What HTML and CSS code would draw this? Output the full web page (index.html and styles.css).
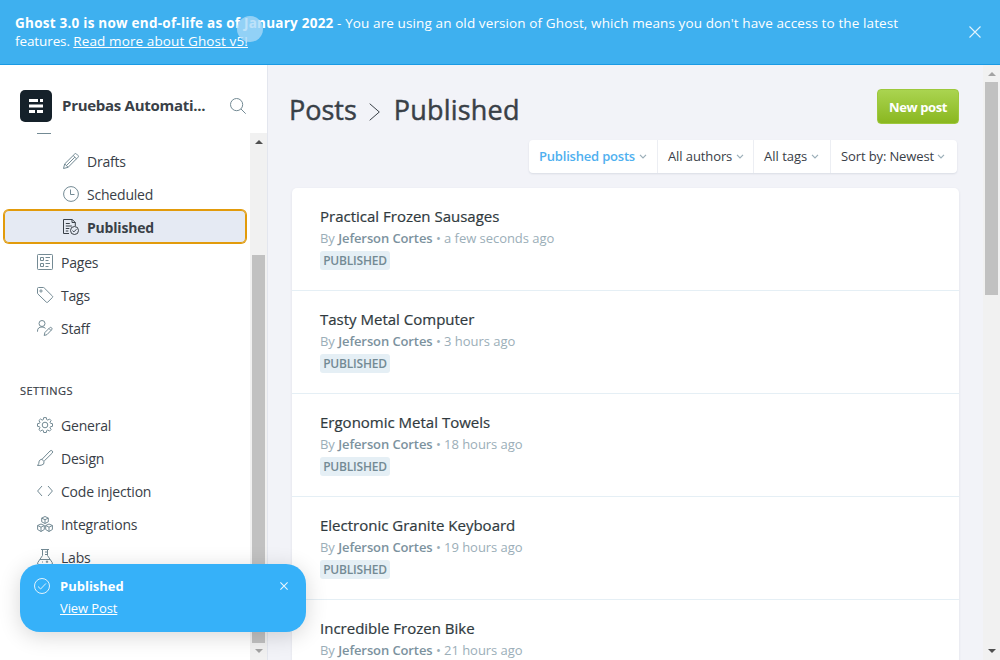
FILE: index.html
```html
<!DOCTYPE html>
<html lang="en">
<head>
<meta charset="utf-8">
<title>Posts - Published</title>
<link rel="stylesheet" href="styles.css">
</head>
<body>
<div class="app">
  <header class="banner">
    <p class="banner-text"><b>Ghost 3.0 is now end-of-life as of January 2022</b> <span class="banner-rest">- You are using an old version of Ghost, which means you don't have access to the latest</span><br><span class="banner-second">features. <a>Read more about Ghost v5!</a></span></p>
    <svg class="banner-close" viewBox="0 0 12 12"><path d="M.5.5l11 11M11.5.5l-11 11"/></svg>
    <span class="click-dot"></span>
  </header>
  <div class="body">
    <aside class="sidebar">
      <div class="brand">
        <svg class="logo" viewBox="0 0 32 32"><rect width="32" height="32" rx="5"/><path d="M9 9h9v3H9zm11 0h3v3h-3zM9 14.5h14v3H9zM9 20h6v3H9zm8 0h6v3h-6z"/></svg>
        <span class="brand-name">Pruebas Automati...</span>
        <svg class="icon search" viewBox="0 0 16 16"><circle cx="6.6" cy="6.6" r="6.1"/><path d="M11 11l4.7 4.7"/></svg>
      </div>
      <div class="nav-wrap">
        <nav class="nav">
          <div class="nav-clip"></div>
          <a class="item sub"><svg class="icon" viewBox="0 0 16 16"><path d="M.5 15.5l1.200-4.600L11.800.9q.8-.8 1.600 0l1.700 1.700q.8.8 0 1.600L5.100 14.300zM1.700 10.900l3.400 3.400M10.200 2.500l3.300 3.300M3.400 12.600l8.400-8.400"/></svg><span>Drafts</span></a>
          <a class="item sub"><svg class="icon" viewBox="0 0 16 16"><circle cx="8" cy="8" r="7.4"/><path d="M7.5 3.5v5h4"/></svg><span>Scheduled</span></a>
          <a class="item sub active"><svg class="icon" viewBox="0 0 16 16"><path d="M6 14.5H.5V.5h8.800l3 3V7M9 .5v3h3.300M2.800 4.500h4M2.800 7h6M2.800 9.500h3.500M2.800 12h2.500"/><circle cx="11.5" cy="11.5" r="4"/><path d="M9.500 11.600l1.400 1.300 2.600-2.700"/></svg><span>Published</span></a>
          <a class="item after"><svg class="icon" viewBox="0 0 16 16"><rect x=".5" y=".5" width="15" height="15" rx=".8"/><path d="M3.500 3.500h3v3h-3zM3.500 9.500h3v3h-3zM8.500 3.500h4.500M8.500 6.500h3M8.500 9.500h4.500M8.500 12.500h3"/></svg><span>Pages</span></a>
          <a class="item"><svg class="icon" viewBox="0 0 16 16"><path d="M.5 1.500q0-1 1-1h4.700q.6 0 1 .4l8.300 8.300q.6.6 0 1.200l-4.800 4.800q-.7.6-1.300 0L.9 7Q.5 6.600.5 6z"/><circle cx="4" cy="4" r="1.1"/></svg><span>Tags</span></a>
          <a class="item"><svg class="icon" viewBox="0 0 16 16"><circle cx="5" cy="3.500" r="3"/><path d="M.5 11.700V11q.1-4 4.500-4 2.300 0 3.500 1.400M7.200 15.500l.7-3 4.700-4.700q1-.9 2 0t0 2L10 14.600zM12 8.500l2 2"/></svg><span>Staff</span></a>
          <h2 class="group">Settings</h2>
          <a class="item"><svg class="icon" viewBox="0 0 16 16"><path d="M6.700.6h2.600l.4 2 1.100.5 1.700-1.100 1.600 1.600L13 5.200l.5 1.100 2 .4v2.600l-2 .4-.5 1.100 1.100 1.700-1.600 1.600-1.700-1.100-1.100.5-.4 2H6.700l-.4-2-1.100-.5-1.700 1.100-1.600-1.600L3 10.800l-.5-1.100-2-.4V6.700l2-.4L3 5.200 1.900 3.600 3.500 2l1.700 1.100 1.100-.5z"/><circle cx="8" cy="8" r="2.800"/></svg><span>General</span></a>
          <a class="item"><svg class="icon" viewBox="0 0 16 16"><path d="M5.100 9.200L13 1q1.200-1 2.200-.1t0 2.200L7.200 11M5 9.200q-2 .1-2.800 1.900-.2 3-1.700 4.400 4.200.2 6.100-1.400Q8.300 12 5 9.200z"/></svg><span>Design</span></a>
          <a class="item"><svg class="icon" viewBox="0 0 16 16"><path d="M5 3L.6 8 5 13M11 3l4.400 5L11 13"/></svg><span>Code injection</span></a>
          <a class="item"><svg class="icon" viewBox="0 0 16 16"><path d="M8 .5l3.300 1.600v3.700L8 7.500 4.700 5.800V2.100zM4.700 2.100L8 3.700l3.300-1.600M8 3.700v3.800M4 8l3.300 1.500v4L4 15.500.6 13.500v-4zM.6 9.500L4 11.200l3.300-1.700M4 11.200v4.300M12 8l3.400 1.500v4L12 15.500l-3.300-2v-4zM8.700 9.500l3.300 1.700 3.400-1.700M12 11.200v4.300"/></svg><span>Integrations</span></a>
          <a class="item"><svg class="icon" viewBox="0 0 16 16"><path d="M4 .5h8M5.500.5v6L.8 13.500q-.8 2 1 2h12.400q1.800 0 1-2L10.500 6.500v-6M8 3h2.500M8 5.500h2.500M3 10.500h10M5 13h1M10 11.500v2.500M8.800 12.800h2.400"/></svg><span>Labs</span></a>
        </nav>
        <div class="scroll side-scroll"><i class="up dark"></i><i class="thumb"></i><i class="down"></i></div>
      </div>
    </aside>
    <main class="main">
      <div class="content">
        <div class="title-row">
          <h1><span>Posts</span><svg class="crumb" viewBox="0 0 11 18"><path d="M.7.7L10.300 9 .7 17.300"/></svg><span class="current">Published</span></h1>
          <button class="new-post">New post</button>
        </div>
        <div class="filters">
          <div class="filter f1"><span>Published posts</span><svg viewBox="0 0 8 5"><path d="M1 .8l3 3 3-3"/></svg></div>
          <div class="filter f2"><span>All authors</span><svg viewBox="0 0 8 5"><path d="M1 .8l3 3 3-3"/></svg></div>
          <div class="filter f3"><span>All tags</span><svg viewBox="0 0 8 5"><path d="M1 .8l3 3 3-3"/></svg></div>
          <div class="filter f4"><span>Sort by: Newest</span><svg viewBox="0 0 8 5"><path d="M1 .8l3 3 3-3"/></svg></div>
        </div>
        <div class="posts">
          <article class="post"><h3>Practical Frozen Sausages</h3><p><span>By</span> <b>Jeferson Cortes</b> <span>• a few seconds ago</span></p><em>PUBLISHED</em></article>
          <article class="post"><h3>Tasty Metal Computer</h3><p><span>By</span> <b>Jeferson Cortes</b> <span>• 3 hours ago</span></p><em>PUBLISHED</em></article>
          <article class="post"><h3>Ergonomic Metal Towels</h3><p><span>By</span> <b>Jeferson Cortes</b> <span>• 18 hours ago</span></p><em>PUBLISHED</em></article>
          <article class="post"><h3>Electronic Granite Keyboard</h3><p><span>By</span> <b>Jeferson Cortes</b> <span>• 19 hours ago</span></p><em>PUBLISHED</em></article>
          <article class="post"><h3>Incredible Frozen Bike</h3><p><span>By</span> <b>Jeferson Cortes</b> <span>• 21 hours ago</span></p></article>
        </div>
      </div>
      <div class="scroll main-scroll"><i class="up"></i><i class="thumb"></i><i class="down dark"></i></div>
    </main>
  </div>
  <div class="toast">
    <svg class="toast-icon" viewBox="0 0 16 16"><circle cx="8" cy="8" r="7.500"/><path d="M4 8.500l2.600 2.500L12 5.400"/></svg>
    <div class="toast-body"><b>Published</b><a>View Post</a></div>
    <svg class="toast-close" viewBox="0 0 8 8"><path d="M.4.4l7.200 7.200M7.600.4L.4 7.600"/></svg>
  </div>
</div>
</body>
</html>
```
FILE: styles.css
```css
* { box-sizing: border-box; }
body { margin: 0; font-family: "Open Sans", "Noto Sans", sans-serif; color: #394047; }
h1, h2, h3, p { margin: 0; }
svg { fill: none; flex: none; overflow: visible; }
.app { position: relative; width: 1000px; height: 660px; overflow: hidden; display: flex; flex-direction: column; background: #f2f3f8; }

.banner { position: relative; height: 65px; flex: none; display: flex; justify-content: space-between; padding: 14px 19px 0 15px; background: #3eb0ef; border-bottom: 1px solid #1a9ae4; color: #fff; }
.banner-text { font-size: 13.5px; line-height: 18px; white-space: nowrap; }
.banner-text b { letter-spacing: .24px; }
.banner-rest { letter-spacing: .11px; }
.banner-second { letter-spacing: -.1px; }
.banner-text a { text-decoration: underline; letter-spacing: .11px; }
.banner-close { width: 12px; height: 12px; margin-top: 12px; stroke: #e2f3fd; stroke-width: 1.1; }
.click-dot { position: absolute; left: 237px; top: 16px; width: 26px; height: 26px; border-radius: 50%; background: rgba(170, 218, 247, .78); }

.body { flex: 1; min-height: 0; display: flex; }
.sidebar { width: 268px; flex: none; display: flex; flex-direction: column; background: #fff; border-right: 1px solid #e3e6ee; }
.brand { height: 68px; flex: none; display: flex; align-items: center; padding: 14px 21px 0 20px; }
.logo { width: 32px; height: 32px; fill: #15212a; }
.logo path { fill: #fff; }
.brand-name { flex: 1; margin-left: 10px; padding-bottom: 2px; font-size: 15px; line-height: 20px; font-weight: 700; letter-spacing: -.28px; white-space: nowrap; }
.icon { width: 16px; height: 16px; stroke: #738a94; stroke-width: 1; stroke-linejoin: round; }
.nav-wrap { flex: 1; min-height: 0; display: flex; }
.nav { flex: 1; overflow: hidden; }
.nav-clip { height: 11px; margin-left: 37px; width: 14px; border-top: 1px solid #738a94; }
.item { height: 33px; display: flex; align-items: center; padding-left: 37px; font-size: 14px; line-height: 20px; letter-spacing: -.2px; color: #394047; }
.item span { margin-left: 8px; padding-top: 2px; white-space: nowrap; }
.item.sub { padding-left: 63px; }
.item.active { margin: 0 4px; padding-left: 59px; background: #e5eaf3; border-radius: 5px; box-shadow: inset 0 0 0 1px #e29b0b, 0 0 0 1px #e29b0b; font-weight: 700; }
.item.active .icon { stroke: #394047; }
.item.after { margin-top: 2px; }
.group { height: 64px; padding: 38px 0 0 20px; font-size: 11px; line-height: 18px; font-weight: 400; letter-spacing: .4px; -webkit-text-stroke: .2px; text-transform: uppercase; }

.scroll { width: 17px; flex: none; display: flex; flex-direction: column; align-items: center; background: #f1f1f1; }
.up, .down { width: 0; height: 0; flex: none; border: 4px solid transparent; border-top-width: 0; border-bottom: 4px solid #a3a3a3; }
.down { border-bottom-width: 0; border-top: 4px solid #a3a3a3; margin-top: auto; margin-bottom: 7px; }
.up { margin-top: 7px; }
.up.dark { border-bottom-color: #505050; }
.down.dark { border-top-color: #505050; }
.thumb { width: 13px; background: #c1c1c1; }
.side-scroll .thumb { height: 388px; margin-top: 111px; }
.main-scroll .thumb { height: 213px; margin-top: 6px; }

.main { flex: 1; min-width: 0; display: flex; }
.content { flex: 1; min-width: 0; padding: 24px 24px 0; }
.title-row { display: flex; justify-content: space-between; height: 50px; }
h1 { display: flex; align-items: center; height: 42px; margin-left: -3px; font-size: 27px; line-height: 36px; font-weight: 400; -webkit-text-stroke: .45px; white-space: nowrap; }
h1 .current { letter-spacing: .2px; }
.crumb { width: 11px; height: 18px; margin: 3px 14px 0 12px; stroke: #394047; }
.new-post { width: 82px; height: 35px; padding: 0; border: 1px solid #9dc83c; border-radius: 4px; background: linear-gradient(#aad450, #8ab720); color: #fff; font: 700 13px/20px "Open Sans", sans-serif; letter-spacing: -.4px; }
.filters { display: flex; width: 428px; height: 33px; margin: 1px 0 0 237px; background: #fff; border-radius: 4px; box-shadow: 0 1px 2px rgba(40, 60, 90, .12); }
.filter { display: flex; align-items: center; padding-left: 10px; border-right: 1px solid #eceef3; font-size: 13px; line-height: 20px; white-space: nowrap; }
.filter span { padding-bottom: 2px; }
.filter svg { width: 8px; height: 5px; margin-left: 4px; stroke: #9baeb8; stroke-width: 1.2; }
.f1 { width: 129px; color: #4fb0ef; font-weight: 600; letter-spacing: -.2px; }
.f2 { width: 96px; letter-spacing: -.1px; }
.f3 { width: 77px; }
.f4 { width: 126px; border: 0; letter-spacing: -.12px; }
.f4 svg { margin-left: 3px; }
.posts { width: 667px; margin-top: 15px; background: #fff; border-radius: 5px; box-shadow: 0 1px 3px rgba(40, 60, 90, .09); }
.post { height: 103px; padding: 17px 28px 0; border-bottom: 1px solid #e5eff5; white-space: nowrap; }
.post h3 { font-size: 15px; line-height: 22px; font-weight: 400; -webkit-text-stroke: .2px; color: #303a3e; }
.post p { margin-top: 1px; font-size: 13px; line-height: 20px; letter-spacing: -.04px; color: #9baeb8; }
.post p b { font-weight: 600; letter-spacing: -.1px; color: #7c929e; }
.post em { display: block; width: 70px; height: 19px; margin-top: 3px; border-radius: 3px; background: #e5eff5; font: 600 12px/19px "Open Sans", sans-serif; letter-spacing: -.2px; text-align: center; color: #738a94; }

.toast { position: absolute; left: 20px; top: 564px; width: 286px; height: 68px; display: flex; padding: 12px 18px 0 14px; border-radius: 20px; background: #36b1f9; color: #fff; box-shadow: 0 4px 22px rgba(0, 0, 0, .16); }
.toast-icon { width: 16px; height: 16px; margin-top: 2px; stroke: #e2f3fd; }
.toast-body { flex: 1; margin-left: 10px; display: flex; flex-direction: column; align-items: flex-start; font-size: 13px; line-height: 20px; }
.toast-body b { font-weight: 700; }
.toast-body a { margin-top: 2px; letter-spacing: -.1px; text-decoration: underline; }
.toast-close { width: 8px; height: 8px; margin-top: 6px; stroke: #e8f6ff; stroke-width: 1.1; }
```
